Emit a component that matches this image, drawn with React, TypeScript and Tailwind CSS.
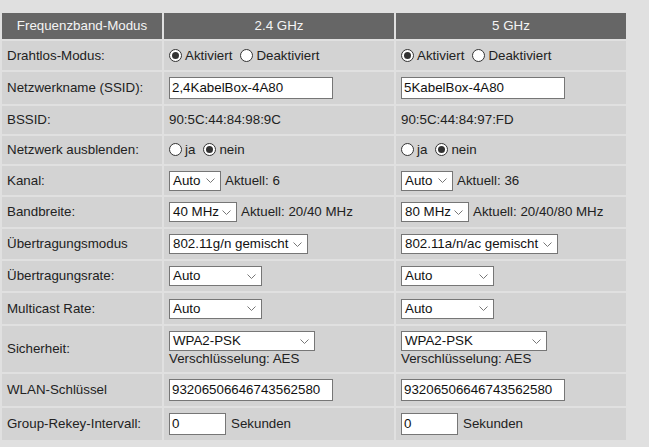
import React from "react";

const FONT = "font-['Liberation_Sans',Arial,sans-serif]";

function Radio({ checked, label }: { checked: boolean; label: string }) {
  return (
    <span className="inline-flex items-center">
      <span className="ml-[5px] mr-[3px] flex h-[13px] w-[13px] items-center justify-center rounded-full border border-[#333] bg-white">
        {checked ? <span className="h-[7px] w-[7px] rounded-full bg-[#333]" /> : null}
      </span>
      <span>{label}</span>
    </span>
  );
}

function Select({ value, width }: { value: string; width: number }) {
  return (
    <span
      className="flex h-[20px] shrink-0 items-center justify-between whitespace-nowrap border border-[#767676] bg-white pl-[3px] pr-[5px]"
      style={{ width }}
    >
      <span className="text-[#111]">{value}</span>
      <svg width="9" height="5" viewBox="0 0 9 5" className="shrink-0">
        <path d="M0.5 0.5 L4.5 4.5 L8.5 0.5" fill="none" stroke="#777" strokeWidth="1" />
      </svg>
    </span>
  );
}

function TextInput({ value, width }: { value: string; width: number }) {
  return (
    <span
      className="flex h-[22px] shrink-0 items-center whitespace-nowrap border border-[#767676] bg-white px-[2px] text-[#111]"
      style={{ width }}
    >
      {value}
    </span>
  );
}

type Band = {
  ssid: string;
  bssid: string;
  kanal: string;
  bw: string;
  bwNow: string;
  mode: string;
  modeW: number;
};

const bands: Band[] = [
  {
    ssid: "2,4KabelBox-4A80",
    bssid: "90:5C:44:84:98:9C",
    kanal: "6",
    bw: "40 MHz",
    bwNow: "20/40 MHz",
    mode: "802.11g/n gemischt",
    modeW: 139,
  },
  {
    ssid: "5KabelBox-4A80",
    bssid: "90:5C:44:84:97:FD",
    kanal: "36",
    bw: "80 MHz",
    bwNow: "20/40/80 MHz",
    mode: "802.11a/n/ac gemischt",
    modeW: 157,
  },
];

const rows: { label: string; h: string; render: (b: Band) => React.ReactNode }[] = [
  {
    label: "Drahtlos-Modus:",
    h: "h-[29px]",
    render: () => (
      <div className="-ml-[5px] flex items-center gap-[3px]">
        <Radio checked label="Aktiviert" />
        <Radio checked={false} label="Deaktiviert" />
      </div>
    ),
  },
  { label: "Netzwerkname (SSID):", h: "h-[32px]", render: (b) => <TextInput value={b.ssid} width={164} /> },
  { label: "BSSID:", h: "h-[28px]", render: (b) => <span>{b.bssid}</span> },
  {
    label: "Netzwerk ausblenden:",
    h: "h-[28px]",
    render: () => (
      <div className="-ml-[5px] flex items-center gap-[3px]">
        <Radio checked={false} label="ja" />
        <Radio checked label="nein" />
      </div>
    ),
  },
  {
    label: "Kanal:",
    h: "h-[29px]",
    render: (b) => (
      <div className="flex items-center gap-[4px] whitespace-nowrap">
        <Select value="Auto" width={52} />
        <span>Aktuell: {b.kanal}</span>
      </div>
    ),
  },
  {
    label: "Bandbreite:",
    h: "h-[30px]",
    render: (b) => (
      <div className="flex items-center gap-[4px] whitespace-nowrap">
        <Select value={b.bw} width={68} />
        <span>Aktuell: {b.bwNow}</span>
      </div>
    ),
  },
  { label: "Übertragungsmodus", h: "h-[30px]", render: (b) => <Select value={b.mode} width={b.modeW} /> },
  { label: "Übertragungsrate:", h: "h-[30px]", render: () => <Select value="Auto" width={93} /> },
  { label: "Multicast Rate:", h: "h-[31px]", render: () => <Select value="Auto" width={93} /> },
  {
    label: "Sicherheit:",
    h: "h-[46px]",
    render: () => (
      <div className="flex flex-col">
        <Select value="WPA2-PSK" width={146} />
        <span className="leading-[16px]">Verschlüsselung: AES</span>
      </div>
    ),
  },
  { label: "WLAN-Schlüssel", h: "h-[32px]", render: () => <TextInput value="93206506646743562580" width={164} /> },
  {
    label: "Group-Rekey-Intervall:",
    h: "h-[32px]",
    render: () => (
      <div className="flex items-center gap-[5px]">
        <TextInput value="0" width={57} />
        <span>Sekunden</span>
      </div>
    ),
  },
];

export default function App() {
  return (
    <div className={`min-h-screen w-full bg-[#e0e0e0] pt-[13px] pl-[2px] text-[13.33px] text-[#222] ${FONT}`}>
      <div className="grid w-[624px] grid-cols-[160px_230px_230px] gap-[2px]">
        {["Frequenzband-Modus", "2.4 GHz", "5 GHz"].map((t) => (
          <div key={t} className="flex h-[26px] items-center justify-center bg-[#666] text-[#f4f4f4]">
            {t}
          </div>
        ))}
        {rows.map((row) => (
          <React.Fragment key={row.label}>
            <div className={`flex items-center whitespace-nowrap bg-[#d3d3d3] px-[5px] ${row.h}`}>{row.label}</div>
            {bands.map((b) => (
              <div key={b.ssid} className={`flex items-center bg-[#d3d3d3] px-[5px] ${row.h}`}>
                {row.render(b)}
              </div>
            ))}
          </React.Fragment>
        ))}
      </div>
    </div>
  );
}
